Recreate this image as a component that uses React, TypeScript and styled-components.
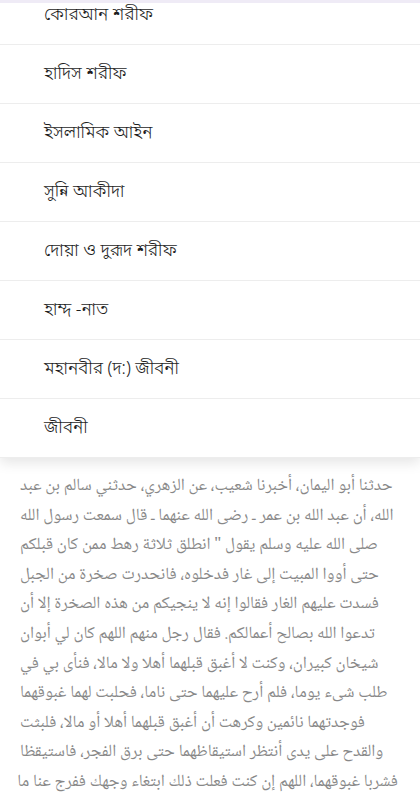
import React from "react";
import styled, { createGlobalStyle } from "styled-components";

const GlobalStyle = createGlobalStyle`
  html, body {
    margin: 0;
    padding: 0;
    background: #ffffff;
  }
  body {
    width: 420px;
    height: 800px;
    overflow: hidden;
    font-family: "Noto Sans", "DejaVu Sans", sans-serif;
  }
`;

const Page = styled.div`
  width: 420px;
  height: 800px;
  overflow: hidden;
  display: flex;
  flex-direction: column;
  background: #ffffff;
`;

const Menu = styled.nav`
  position: relative;
  z-index: 2;
  background: #ffffff;
  overflow: hidden;
  flex-shrink: 0;
  box-shadow: 0 5px 12px rgba(0, 0, 0, 0.1);
`;

const TopBand = styled.div`
  position: absolute;
  top: 0;
  left: 0;
  right: 0;
  height: 3px;
  background: #efebf6;
  z-index: 1;
`;

const List = styled.ul`
  list-style: none;
  margin: -14px 0 0 0;
  padding: 0;
`;

const Item = styled.li`
  height: 58px;
  display: flex;
  align-items: center;
  padding-left: 44px;
  border-bottom: 1px solid #ededed;
  font-family: "Noto Sans Bengali", "Noto Sans", "DejaVu Sans", sans-serif;
  font-size: 17.5px;
  font-weight: 300;
  color: #1e1e1e;
`;

const Article = styled.div`
  padding: 14px 22px 0 20px;
  display: flex;
  flex-direction: column;
  font-family: "Noto Naskh Arabic", "Noto Sans Arabic", "DejaVu Sans", sans-serif;
  font-size: 17px;
  line-height: 29.6px;
  color: #888888;
`;

const Line = styled.div`
  direction: rtl;
  text-align: left;
  white-space: nowrap;
`;

const items = [
  "কোরআন শরীফ",
  "হাদিস শরীফ",
  "ইসলামিক আইন",
  "সুন্নি আকীদা",
  "দোয়া ও দুরূদ শরীফ",
  "হাম্দ -নাত",
  "মহানবীর (দ:) জীবনী",
  "জীবনী",
];

const lines = [
  "حدثنا أبو اليمان، أخبرنا شعيب، عن الزهري، حدثني سالم بن عبد",
  "الله، أن عبد الله بن عمر ـ رضى الله عنهما ـ قال سمعت رسول الله",
  "صلى الله عليه وسلم يقول \" انطلق ثلاثة رهط ممن كان قبلكم",
  "حتى أووا المبيت إلى غار فدخلوه، فانحدرت صخرة من الجبل",
  "فسدت عليهم الغار فقالوا إنه لا ينجيكم من هذه الصخرة إلا أن",
  "تدعوا الله بصالح أعمالكم. فقال رجل منهم اللهم كان لي أبوان",
  "شيخان كبيران، وكنت لا أغبق قبلهما أهلا ولا مالا، فنأى بي في",
  "طلب شىء يوما، فلم أرح عليهما حتى ناما، فحلبت لهما غبوقهما",
  "فوجدتهما نائمين وكرهت أن أغبق قبلهما أهلا أو مالا، فلبثت",
  "والقدح على يدى أنتظر استيقاظهما حتى برق الفجر، فاستيقظا",
  "فشربا غبوقهما، اللهم إن كنت فعلت ذلك ابتغاء وجهك ففرج عنا ما",
];

export default function App() {
  return (
    <>
      <GlobalStyle />
      <Page>
        <Menu>
          <TopBand />
          <List>
            {items.map((t) => (
              <Item key={t}>{t}</Item>
            ))}
          </List>
        </Menu>
        <Article>
          {lines.map((l, i) => (
            <Line key={i}>{l}</Line>
          ))}
        </Article>
      </Page>
    </>
  );
}
